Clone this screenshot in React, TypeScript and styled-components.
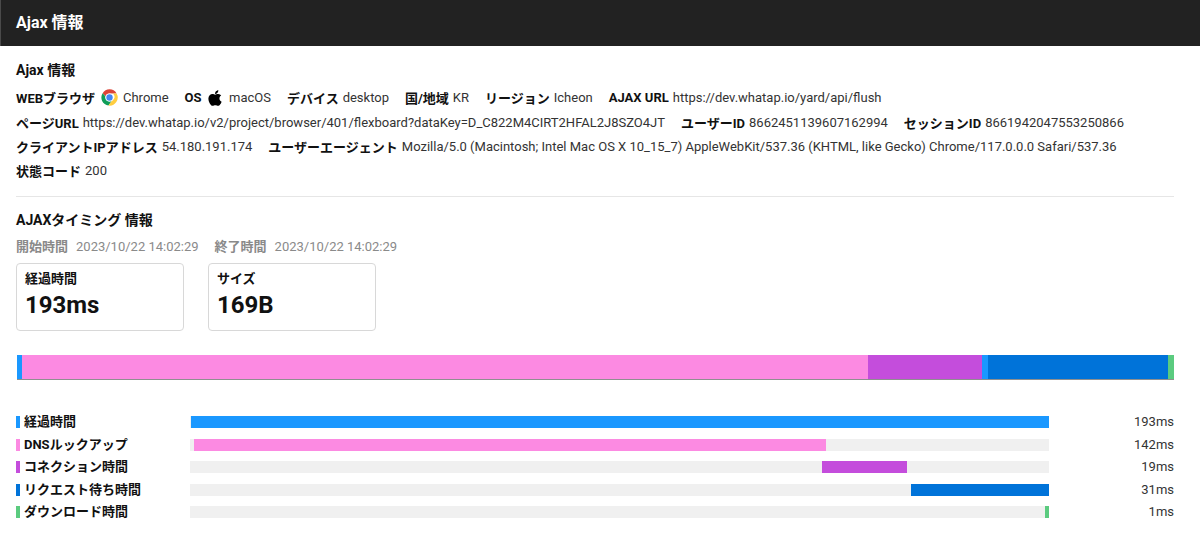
import React from "react";
import styled, { createGlobalStyle } from "styled-components";
import { FaApple } from "react-icons/fa";

const Global = createGlobalStyle`
  html, body { margin: 0; padding: 0; background: #fff; }
  body { font-family: Roboto, "Noto Sans CJK JP", sans-serif; color: #222; }
`;

const Header = styled.header`
  height: 46px;
  box-sizing: border-box;
  background: #222222;
  border-left: 1px solid #4a4a4a;
  color: #fff;
  display: flex;
  align-items: center;
  padding-left: 15px;
  padding-bottom: 4px;
  font-size: 16px;
  font-weight: 700;
`;

const Body = styled.main`
  padding: 14px 26px 0 16px;
`;

const SectionTitle = styled.h2`
  margin: 0;
  font-size: 14px;
  line-height: 20px;
  font-weight: 700;
  color: #111;
`;

const Rows = styled.div`
  margin-top: 5px;
  display: flex;
  flex-direction: column;
`;

const InfoRow = styled.div<{ $h?: number }>`
  display: flex;
  align-items: center;
  gap: 16px;
  height: ${(p) => p.$h ?? 24}px;
  font-size: 13px;
  white-space: nowrap;
`;

const Item = styled.span`
  display: inline-flex;
  align-items: center;
  gap: 4px;
`;

const Key = styled.b`
  font-weight: 700;
  color: #111;
`;

const Val = styled.span`
  color: #333;
`;

const ChromeSlot = styled.span`
  display: inline-flex;
  margin: 0 1px 0 2px;
`;

const AppleSlot = styled.span`
  display: inline-flex;
  margin-right: 1.5px;
`;

const Divider = styled.hr`
  margin: 14px 0 13px;
  border: 0;
  height: 1px;
  background: #e6e6e6;
`;

const TimeRow = styled.div`
  display: flex;
  gap: 16px;
  margin-top: 5px;
  height: 20px;
  align-items: center;
  font-size: 13px;
  color: #8a8a8a;
`;

const TimeKey = styled.b`
  font-weight: 700;
  margin-right: 8px;
`;

const Cards = styled.div`
  display: flex;
  gap: 24px;
  margin-top: 8px;
`;

const Card = styled.div`
  width: 168px;
  height: 68px;
  box-sizing: border-box;
  border: 1px solid #d8d8d8;
  border-radius: 4px;
  padding: 6px 8px;
`;

const CardLabel = styled.div`
  font-size: 13px;
  line-height: 18px;
  font-weight: 700;
  color: #111;
`;

const CardValue = styled.div`
  margin-top: 3px;
  font-size: 24px;
  line-height: 28px;
  font-weight: 700;
  color: #111;
`;

const Stack = styled.div`
  margin: 24px 0 0 1px;
  display: flex;
  height: 25px;
  box-sizing: border-box;
  border-bottom: 1px solid #8f8f8f;
`;

const Seg = styled.div<{ $w: number; $c: string }>`
  width: ${(p) => p.$w}px;
  background: ${(p) => p.$c};
`;

const Timing = styled.div`
  margin-top: 31px;
  display: flex;
  flex-direction: column;
`;

const TimingRow = styled.div`
  display: grid;
  grid-template-columns: 174px 859px 1fr;
  align-items: center;
  height: 22.5px;
`;

const Label = styled.div<{ $c: string }>`
  display: flex;
  align-items: center;
  gap: 4px;
  font-size: 13px;
  line-height: 14px;
  font-weight: 700;
  color: #111;
  &::before {
    content: "";
    width: 4px;
    height: 12px;
    background: ${(p) => p.$c};
  }
`;

const Track = styled.div`
  height: 12px;
  background: #f0f0f0;
`;

const Fill = styled.div<{ $x: number; $w: number; $c: string }>`
  height: 100%;
  margin-left: ${(p) => p.$x}px;
  width: ${(p) => p.$w}px;
  background: ${(p) => p.$c};
`;

const Ms = styled.div`
  text-align: right;
  font-size: 13px;
  line-height: 14px;
  color: #333;
`;

const ChromeIcon = () => (
  <svg width="17" height="18" viewBox="0 0 48 50.800" aria-hidden="true">
    <path fill="#DB4437" d="M24 1a23 23 0 0 1 20 11.5H24a11.5 11.5 0 0 0-11 8.2L4.6 11.700A23 23 0 0 1 24 1z" />
    <path fill="#0F9D58" d="M4.600 11.700A23 23 0 0 0 21 46.800l9.800-13.600A11.500 11.500 0 0 1 13 21z" />
    <path fill="#FFCD40" d="M44 12.500A23 23 0 0 1 21 46.800l10-13.800a11.500 11.500 0 0 0 2-20.500z" />
    <circle cx="24" cy="24" r="11.500" fill="#fff" />
    <circle cx="24" cy="24" r="9" fill="#4285F4" />
  </svg>
);

const segs: [number, string][] = [
  [5, "#1a98ff"], [846, "#fc8ae2"], [114, "#c44ddc"], [6, "#1a98ff"], [180, "#0073d9"], [6, "#5bcb7f"],
];

const timing = [
  { label: "経過時間", c: "#1a98ff", x: 1, w: 858, ms: "193ms" },
  { label: "DNSルックアップ", c: "#fc8ae2", x: 4, w: 632, ms: "142ms" },
  { label: "コネクション時間", c: "#c44ddc", x: 632, w: 85, ms: "19ms" },
  { label: "リクエスト待ち時間", c: "#0073d9", x: 721, w: 138, ms: "31ms" },
  { label: "ダウンロード時間", c: "#5bcb7f", x: 855, w: 4, ms: "1ms" },
];

export default function App() {
  return (
    <>
      <Global />
      <Header>Ajax 情報</Header>
      <Body>
        <SectionTitle>Ajax 情報</SectionTitle>
        <Rows>
          <InfoRow $h={25}>
            <Item><Key>WEBブラウザ</Key><ChromeSlot><ChromeIcon /></ChromeSlot><Val>Chrome</Val></Item>
            <Item><Key>OS</Key><AppleSlot><FaApple size={18} color="#000" /></AppleSlot><Val>macOS</Val></Item>
            <Item><Key>デバイス</Key><Val>desktop</Val></Item>
            <Item><Key>国/地域</Key><Val>KR</Val></Item>
            <Item><Key>リージョン</Key><Val>Icheon</Val></Item>
            <Item><Key>AJAX URL</Key><Val>https://dev.whatap.io/yard/api/flush</Val></Item>
          </InfoRow>
          <InfoRow>
            <Item><Key>ページURL</Key><Val>https://dev.whatap.io/v2/project/browser/401/flexboard?dataKey=D_C822M4CIRT2HFAL2J8SZO4JT</Val></Item>
            <Item><Key>ユーザーID</Key><Val>8662451139607162994</Val></Item>
            <Item><Key>セッションID</Key><Val>8661942047553250866</Val></Item>
          </InfoRow>
          <InfoRow>
            <Item><Key>クライアントIPアドレス</Key><Val>54.180.191.174</Val></Item>
            <Item><Key>ユーザーエージェント</Key><Val>Mozilla/5.0 (Macintosh; Intel Mac OS X 10_15_7) AppleWebKit/537.36 (KHTML, like Gecko) Chrome/117.0.0.0 Safari/537.36</Val></Item>
          </InfoRow>
          <InfoRow>
            <Item><Key>状態コード</Key><Val>200</Val></Item>
          </InfoRow>
        </Rows>
        <Divider />
        <SectionTitle>AJAXタイミング 情報</SectionTitle>
        <TimeRow>
          <span><TimeKey>開始時間</TimeKey>2023/10/22 14:02:29</span>
          <span><TimeKey>終了時間</TimeKey>2023/10/22 14:02:29</span>
        </TimeRow>
        <Cards>
          <Card><CardLabel>経過時間</CardLabel><CardValue>193ms</CardValue></Card>
          <Card><CardLabel>サイズ</CardLabel><CardValue>169B</CardValue></Card>
        </Cards>
        <Stack>
          {segs.map(([w, c], i) => <Seg key={i} $w={w} $c={c} />)}
        </Stack>
        <Timing>
          {timing.map((t) => (
            <TimingRow key={t.label}>
              <Label $c={t.c}>{t.label}</Label>
              <Track><Fill $x={t.x} $w={t.w} $c={t.c} /></Track>
              <Ms>{t.ms}</Ms>
            </TimingRow>
          ))}
        </Timing>
      </Body>
    </>
  );
}
